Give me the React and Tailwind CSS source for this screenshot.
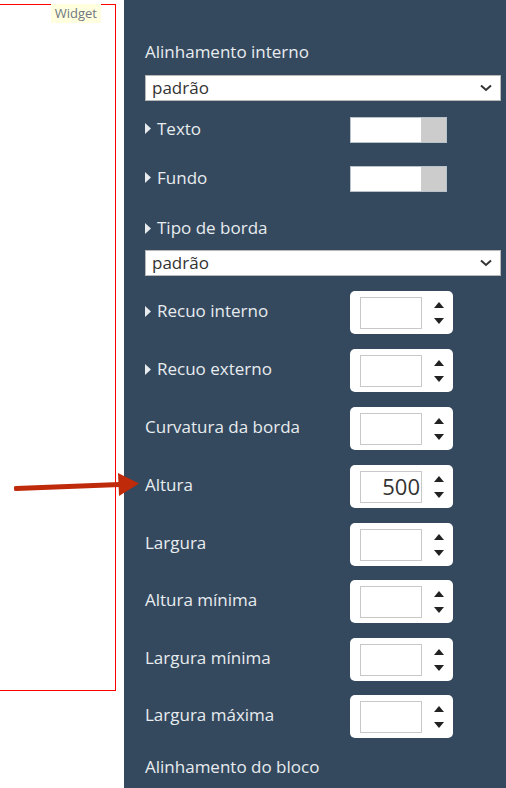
import React from "react";

const font = { fontFamily: "'Open Sans', Lato, sans-serif" };

function Caret() {
  return (
    <svg width="7" height="11" viewBox="0 0 7 11" className="mr-[5px] shrink-0">
      <path d="M0 0 L6 5.5 L0 11 Z" fill="#e8ecef" />
    </svg>
  );
}

function Select({ value }) {
  return (
    <div className="flex h-[26px] items-center justify-between border border-[#b8b8b8] bg-white pl-[6px] pr-[8px] text-[#333]">
      <span>{value}</span>
      <svg width="12" height="8" viewBox="0 0 12 8">
        <path d="M1 1.5 L6 6 L11 1.5" stroke="#333" strokeWidth="2" fill="none" />
      </svg>
    </div>
  );
}

function Swatch() {
  return (
    <div className="flex h-[26px] w-[97px] border border-[#b9c2ca]">
      <div className="w-[70px] bg-white" />
      <div className="flex-1 bg-[#cccccc]" />
    </div>
  );
}

function Spinner({ value }) {
  return (
    <div className="flex h-[43px] w-[103px] items-center rounded-[5px] bg-white pl-[10px]">
      <div className="flex h-[32px] w-[62px] items-center justify-end border border-[#c8c8c8] pr-[1px] text-[22px] text-[#333]">
        {value}
      </div>
      <div className="ml-[12px] flex flex-col gap-[10px]">
        <svg width="10" height="6" viewBox="0 0 10 6"><path d="M0 6 L5 0 L10 6 Z" fill="#222" /></svg>
        <svg width="10" height="6" viewBox="0 0 10 6"><path d="M0 0 L5 6 L10 0 Z" fill="#222" /></svg>
      </div>
    </div>
  );
}

function Row({ label, caret, children, className = "" }) {
  return (
    <div className={`flex items-center ${className}`}>
      <div className="-mt-[3px] flex w-[205px] items-center">
        {caret && <Caret />}
        <span>{label}</span>
      </div>
      {children}
    </div>
  );
}

export default function App() {
  const spinners = [
    { label: "Recuo interno", caret: true, mt: "mt-[15px]" },
    { label: "Recuo externo", caret: true, mt: "mt-[15px]" },
    { label: "Curvatura da borda", mt: "mt-[15px]" },
    { label: "Altura", mt: "mt-[15px]", value: "500" },
    { label: "Largura", mt: "mt-[15px]" },
    { label: "Altura mínima", mt: "mt-[14px]" },
    { label: "Largura mínima", mt: "mt-[15px]" },
    { label: "Largura máxima", mt: "mt-[14px]" },
  ];

  return (
    <div className="relative flex h-[788px] w-[506px] overflow-hidden bg-white" style={font}>
      <div className="w-[124px] shrink-0 bg-white pt-[4px]">
        <div className="relative h-[687px] w-[116px] border-t border-r border-b border-[#ff0000]">
          <span className="absolute top-[-1px] right-[14px] bg-[#ffffe0] px-[4px] text-[13px] leading-[19px] text-[#6f7780]">
            Widget
          </span>
        </div>
      </div>

      <div className="flex-1 bg-[#34495e] pt-[39px] pl-[21px] pr-[5px] text-[17px] text-[#e8ecef]">
        <div className="flex h-[26px] items-center">Alinhamento interno</div>
        <div className="mt-[10px]"><Select value="padrão" /></div>

        <Row label="Texto" caret className="mt-[16px]"><Swatch /></Row>
        <Row label="Fundo" caret className="mt-[23px]"><Swatch /></Row>

        <div className="mt-[23px] flex h-[26px] items-center"><Caret />Tipo de borda</div>
        <div className="mt-[9px]"><Select value="padrão" /></div>

        {spinners.map((s) => (
          <Row key={s.label} label={s.label} caret={s.caret} className={s.mt}>
            <Spinner value={s.value} />
          </Row>
        ))}

        <div className="mt-[16px] flex h-[26px] items-center">Alinhamento do bloco</div>
      </div>

      <svg className="absolute left-[14px] top-[470px]" width="128" height="28" viewBox="0 0 128 28">
        <path d="M2 18.5 L106 14.5" stroke="#bf2a0a" strokeWidth="5" strokeLinecap="round" />
        <path d="M104 3 L125 13.5 L105 26 Z" fill="#bf2a0a" />
      </svg>
    </div>
  );
}
